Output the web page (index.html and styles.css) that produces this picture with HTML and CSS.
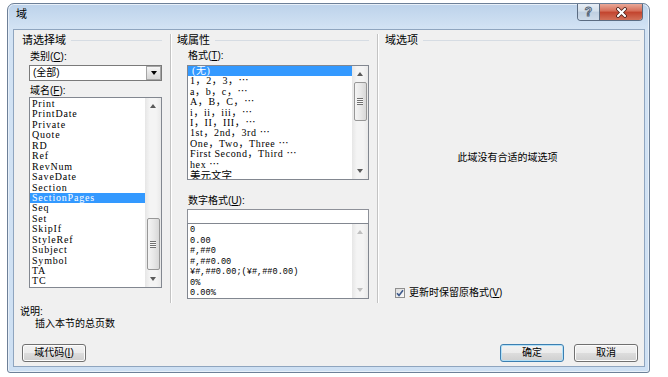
FILE: index.html
```html
<!DOCTYPE html>
<html lang="zh-CN">
<head>
    <meta charset="UTF-8">
    <meta name="viewport" content="width=device-width, initial-scale=1.0">
    <title>域</title>
    <link rel="stylesheet" href="styles.css">
</head>
<body>
    <div class="window">
        <div class="titlebar">
            <span class="title">域</span>
            <div class="caption">
                <span class="cap-help">?</span>
                <span class="cap-close">
                    <svg width="13" height="11" viewBox="0 0 13 11"><path d="M3 2l7 7M10 2l-7 7" stroke="#4a2019" stroke-width="3.8" stroke-linecap="round"/><path d="M3 2l7 7M10 2l-7 7" stroke="#fff" stroke-width="2.2" stroke-linecap="round"/></svg>
                </span>
            </div>
        </div>

        <div class="client">
            <div class="groups">
                <div class="col col-pick">
                    <div class="head"><span>请选择域</span></div>
                    <div class="label">类别(<u>C</u>):</div>
                    <div class="combo"><span>(全部)</span><b class="drop"></b></div>
                    <div class="label label-name">域名(<u>F</u>):</div>
                    <div class="list names">
                        <ul class="items">
                            <li>Print</li>
                            <li>PrintDate</li>
                            <li>Private</li>
                            <li>Quote</li>
                            <li>RD</li>
                            <li>Ref</li>
                            <li>RevNum</li>
                            <li>SaveDate</li>
                            <li>Section</li>
                            <li class="sel">SectionPages</li>
                            <li>Seq</li>
                            <li>Set</li>
                            <li>SkipIf</li>
                            <li>StyleRef</li>
                            <li>Subject</li>
                            <li>Symbol</li>
                            <li>TA</li>
                            <li>TC</li>
                        </ul>
                        <div class="vscroll">
                            <span class="arr up"></span>
                            <div class="track"><span class="thumb thumb-names"></span></div>
                            <span class="arr down"></span>
                        </div>
                    </div>
                </div>

                <div class="col col-props">
                    <div class="head"><span>域属性</span></div>
                    <div class="label">格式(<u>T</u>):</div>
                    <div class="list formats">
                        <ul class="items">
                            <li class="sel">(无)</li>
                            <li>1，2，3，⋯</li>
                            <li>a，b，c，⋯</li>
                            <li>A，B，C，⋯</li>
                            <li>i，ii，iii，⋯</li>
                            <li>I，II，III，⋯</li>
                            <li>1st，2nd，3rd ⋯</li>
                            <li>One，Two，Three ⋯</li>
                            <li>First Second，Third ⋯</li>
                            <li>hex ⋯</li>
                            <li class="cjk">美元文字</li>
                        </ul>
                        <div class="vscroll">
                            <span class="arr up"></span>
                            <div class="track"><span class="thumb thumb-formats"></span></div>
                            <span class="arr down"></span>
                        </div>
                    </div>
                    <div class="label label-num">数字格式(<u>U</u>):</div>
                    <div class="textbox"></div>
                    <div class="list numbers">
                        <ul class="items">
                            <li>0</li>
                            <li>0.00</li>
                            <li>#,##0</li>
                            <li>#,##0.00</li>
                            <li>¥#,##0.00;(¥#,##0.00)</li>
                            <li>0%</li>
                            <li>0.00%</li>
                        </ul>
                        <div class="vscroll off">
                            <span class="arr up"></span>
                            <div class="track"></div>
                            <span class="arr down"></span>
                        </div>
                    </div>
                </div>

                <div class="col col-opts">
                    <div class="head"><span>域选项</span></div>
                    <div class="no-opts">此域没有合适的域选项</div>
                    <label class="check">
                        <span class="box">
                            <svg width="8" height="8" viewBox="0 0 8 8"><path d="M1 4.2l2 2.2L7 1.2" fill="none" stroke="#3e5a8c" stroke-width="1.6"/></svg>
                        </span>
                        <span>更新时保留原格式(<u>V</u>)</span>
                    </label>
                </div>
            </div>

            <div class="bottom">
                <div class="desc-title">说明:</div>
                <div class="desc">插入本节的总页数</div>
                <div class="buttons">
                    <button class="btn btn-code">域代码(<u>I</u>)</button>
                    <button class="btn btn-ok">确定</button>
                    <button class="btn">取消</button>
                </div>
            </div>
        </div>
    </div>
</body>
</html>
```

FILE: styles.css
```css
* {
    box-sizing: border-box;
}
body {
    margin: 0;
    background: #fff;
    font-family: "Liberation Sans", "Noto Sans CJK SC", sans-serif;
    font-size: 10px;
    line-height: 12px;
    color: #000;
}
u {
    text-decoration: underline;
}

/* window frame */
.window {
    width: 643px;
    height: 370px;
    margin: 3px 0 0 7px;
    padding: 0 4px 5px 5px;
    display: flex;
    flex-direction: column;
    border: 1px solid #6d8098;
    border-radius: 7px 7px 3px 3px;
    background: linear-gradient(#bcd2ea, #d3e3f4 25px, #cee0f3);
    box-shadow: inset 0 0 0 1px #e8f0f9;
}
.titlebar {
    height: 25px;
    display: flex;
    align-items: flex-start;
}
.title {
    font-size: 11px;
    margin: 4px 0 0 3px;
}
.caption {
    margin-left: auto;
    margin-right: 2px;
    display: flex;
    height: 17px;
    border: 1px solid #5b6c82;
    border-top: none;
    border-radius: 0 0 4px 4px;
    overflow: hidden;
}
.cap-help {
    width: 22px;
    border-right: 1px solid #5b6c82;
    background: linear-gradient(#e6edf5, #d3dfeb 45%, #bfcfe1 50%, #cfdcea);
    text-align: center;
    font: bold 12px/16px "Liberation Sans", sans-serif;
    color: #eef3f8;
    -webkit-text-stroke: 1px #56667a;
}
.cap-close {
    width: 42px;
    display: flex;
    align-items: center;
    justify-content: center;
    background: linear-gradient(#e9a898, #d56c56 45%, #c2432d 50%, #d27058);
}

/* client area */
.client {
    flex: 1;
    display: flex;
    flex-direction: column;
    background: #f0f0f0;
    border: 1px solid #8fa5bf;
}
.groups {
    display: flex;
    height: 273px;
    padding-top: 4px;
}
.col {
    display: flex;
    flex-direction: column;
    align-items: flex-start;
}
.col-pick {
    width: 156px;
    padding: 0 8px;
}
.col-props {
    width: 207px;
    padding: 0 8px 0 6px;
    border-left: 1px solid #c3c3c3;
    box-shadow: inset 1px 0 #fff;
}
.col-opts {
    flex: 1;
    padding: 0 4px 0 7px;
    border-left: 1px solid #c3c3c3;
    box-shadow: inset 1px 0 #fff;
}
.head {
    align-self: stretch;
    display: flex;
    align-items: center;
    gap: 5px;
    font-size: 11px;
}
.head::after {
    content: "";
    flex: 1;
    height: 1px;
    background: #d6dce3;
}
.label {
    margin-top: 5px;
}
.col-pick .label {
    margin-left: 8px;
}
.col-pick .label-name {
    margin-top: 4px;
}
.col-props .label {
    margin: 4px 0 0 11px;
}
.col-props .label-num {
    margin-top: 15px;
}

/* combo box */
.combo {
    width: 133px;
    height: 16px;
    margin: 2px 0 0 7px;
    display: flex;
    align-items: center;
    justify-content: space-between;
    border: 1px solid #7a7a7a;
    background: #fff;
    padding-left: 3px;
}
.drop {
    width: 15px;
    height: 14px;
    display: flex;
    align-items: center;
    justify-content: center;
    border: 1px solid #a5a5a5;
    background: linear-gradient(#f6f6f6, #e4e4e4 50%, #d6d6d6);
}
.drop::before {
    content: "";
    border-left: 3.5px solid transparent;
    border-right: 3.5px solid transparent;
    border-top: 4px solid #000;
}

/* list boxes */
.list {
    display: flex;
    border: 1px solid #828790;
    background: #fff;
}
.names {
    width: 133px;
    height: 191px;
    margin-left: 7px;
}
.formats {
    width: 182px;
    height: 115px;
    margin: 3px 0 0 10px;
}
.numbers {
    width: 182px;
    height: 76px;
    margin-left: 10px;
}
.items {
    flex: 1;
    margin: 0;
    padding: 0;
    list-style: none;
    overflow: hidden;
    white-space: nowrap;
}
.names .items {
    padding-top: 1px;
    font: 10px/10.45px "Liberation Serif", "Noto Sans CJK SC", serif;
    letter-spacing: .8px;
}
.names li {
    height: 10.45px;
    padding-left: 2px;
}
.formats .items {
    font: 10px/10.4px "Liberation Serif", "Noto Sans CJK SC", serif;
    letter-spacing: .6px;
}
.formats li {
    height: 10.4px;
    padding-left: 2px;
}
.formats li.sel {
    padding-left: 4px;
}
.formats li.cjk {
    font-family: "Noto Sans CJK SC", sans-serif;
    font-size: 10.5px;
    letter-spacing: 0;
}
.numbers .items {
    padding-top: 1px;
    font: 8.6px/10.5px "Liberation Mono", monospace;
}
.numbers li {
    padding-left: 2px;
}
.sel {
    background: #3399ff;
    color: #fff;
}
.textbox {
    width: 182px;
    height: 14px;
    margin: 2px 0 0 10px;
    border: 1px solid #8e9199;
    border-bottom: none;
    background: #fff;
}

/* scroll bars */
.vscroll {
    width: 16px;
    display: flex;
    flex-direction: column;
    background: linear-gradient(to right, #e6e6e6, #f4f4f4 30%, #f4f4f4 70%, #e9e9e9);
}
.arr {
    height: 16px;
    display: flex;
    align-items: center;
    justify-content: center;
}
.arr::before {
    content: "";
    border-left: 3.5px solid transparent;
    border-right: 3.5px solid transparent;
}
.up::before {
    border-bottom: 4px solid #5a5a5a;
}
.down::before {
    border-top: 4px solid #5a5a5a;
}
.off .up::before {
    border-bottom-color: #bfbfbf;
}
.off .down::before {
    border-top-color: #bfbfbf;
}
.track {
    flex: 1;
    display: flex;
    flex-direction: column;
    align-items: center;
}
.thumb {
    width: 13px;
    display: flex;
    align-items: center;
    justify-content: center;
    border: 1px solid #979797;
    border-radius: 2px;
    background: linear-gradient(to right, #f4f4f4, #e8e8e8 50%, #d8d8d8);
}
.thumb::before {
    content: "";
    width: 6px;
    height: 7px;
    background: repeating-linear-gradient(#707070 0 1px, #f8f8f8 1px 2px);
}
.thumb-names {
    margin-top: 104px;
    height: 52px;
}
.thumb-formats {
    height: 39px;
}

/* options */
.no-opts {
    align-self: stretch;
    margin-top: 106px;
    padding-right: 10px;
    text-align: center;
}
.check {
    margin: 123px 0 0 10px;
    display: flex;
    align-items: center;
    gap: 4px;
}
.box {
    width: 10px;
    height: 10px;
    display: flex;
    align-items: center;
    justify-content: center;
    border: 1px solid #8f8f8f;
    background: linear-gradient(135deg, #dcdcdc, #fbfbfb);
}

/* bottom part */
.bottom {
    flex: 1;
    padding: 3px 6px 0 6px;
}
.desc {
    margin-left: 15px;
}
.buttons {
    display: flex;
    gap: 10px;
    margin: 14px 0 0 2px;
}
.btn {
    width: 64px;
    height: 18px;
    padding: 0;
    font: inherit;
    color: #000;
    border: 1px solid #707070;
    border-radius: 3px;
    background: linear-gradient(#f2f2f2, #ebebeb 50%, #dddddd 50%, #cfcfcf);
    box-shadow: inset 0 0 0 1px #fcfcfc;
}
.btn-code {
    margin-right: auto;
}
.btn-ok {
    border-color: #3c7fb1;
    box-shadow: inset 0 0 0 1px #b3e0f7;
}
```
